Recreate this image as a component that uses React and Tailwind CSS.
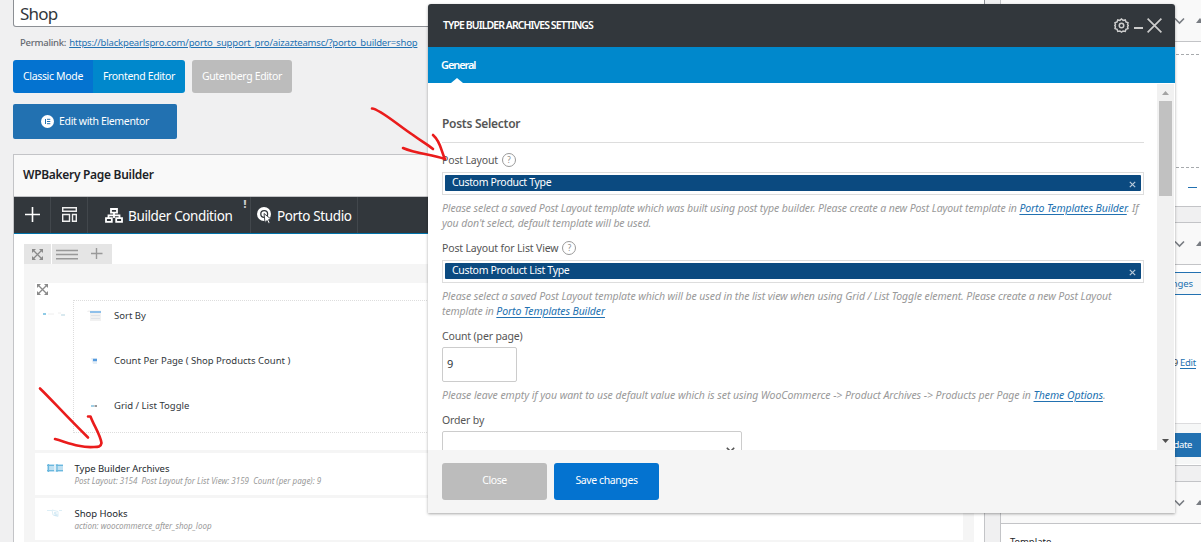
// -----------------------------------------------------------------------------
// File: App.jsx
// Description: Porto shop builder edit screen with the WPBakery element
// settings window opened over it.
// -----------------------------------------------------------------------------

const ExpandIcon = () => (
  <svg className="block h-[11px] w-[11px]" viewBox="0 0 11 11" fill="#8a8a8a">
    <path d="M0 0h4L0 4zM11 0v4L7 0zM0 11V7l4 4zM11 11H7l4-4z" />
    <path d="M1.500 1.500l8 8M9.500 1.500l-8 8" stroke="#8a8a8a" strokeWidth="1.3" />
  </svg>
);

const Chevron = () => (
  <svg className="h-[8px] w-[11px]" viewBox="0 0 11 8" fill="none" stroke="#787c82" strokeWidth="1.6">
    <path d="M1 1.5l4.5 4.5L10 1.5" />
  </svg>
);

const Triangle = () => (
  <svg className="h-[5px] w-[8px] shrink-0" viewBox="0 0 8 5" fill="#787c82">
    <path d="M0 5L4 0l4 5z" />
  </svg>
);

const Help = () => (
  <span className="ml-1 flex h-[14px] w-[14px] items-center justify-center rounded-full border border-[#999] text-[8px] leading-none text-[#888]">
    ?
  </span>
);

const Link = ({ children }) => (
  <a className="text-[#2271b1] underline underline-offset-2">{children}</a>
);

/**
 * Top bar of the WPBakery editor
 */
const Toolbar = () => (
  <div className="flex h-[37px] border-b border-[#0073aa] bg-[#32373c] text-[13.5px] tracking-[-0.37px] text-white">
    <div className="flex w-[37px] items-center justify-center border-r border-[#42474c]">
      <svg className="mb-[2px] h-[15px] w-[15px]" viewBox="0 0 15 15" stroke="#fff" strokeWidth="1.6">
        <path d="M7.5 0v15M0 7.5h15" />
      </svg>
    </div>
    <div className="flex w-[37px] items-center justify-center border-r border-[#42474c]">
      <svg className="mb-[2px] h-[15px] w-[15px]" viewBox="0 0 15 15" fill="none" stroke="#f0f0f0" strokeWidth="1.4">
        <path d="M.7.8h13.600v3.400H.7zM.7 7.500h6.800v6.700H.7zM10.500 7.500h3.800v6.700h-3.800z" />
      </svg>
    </div>
    <div className="relative flex w-[163px] items-center border-r border-[#42474c] pl-[17px]">
      <svg className="h-[15px] w-[18px]" viewBox="0 0 18 15" fill="none" stroke="#fff" strokeWidth="1.8">
        <path d="M6 1h6v3.600H6zM9 5v5M3.500 10V7.300h11V10M1 10.200h5.800v3.600H1zM11.200 10.200H17v3.600h-5.800z" />
      </svg>
      <span className="ml-[5px] pt-[2px] whitespace-nowrap">Builder Condition</span>
      <span className="absolute top-[2px] right-[4px] text-[10px] leading-none font-black text-[#ccc]">!</span>
    </div>
    <div className="flex w-[107px] items-center border-r border-[#42474c] pl-[6px]">
      <svg className="h-[17px] w-[15px]" viewBox="0 0 15 17">
        <circle cx="7" cy="7" r="7" fill="#fff" />
        <circle cx="7.2" cy="7" r="3.4" fill="none" stroke="#32373c" strokeWidth="1.3" />
        <path d="M7 6.5l1 9 2-2 1.5 3 1.6-.8-1.5-3 2.6-.4z" fill="#fff" stroke="#32373c" strokeWidth=".9" />
      </svg>
      <span className="ml-[5px] pt-[2px] whitespace-nowrap">Porto Studio</span>
    </div>
  </div>
);

const InnerRow = ({ label, children }) => (
  <div className="flex h-[45px] items-start pt-[7px]">
    <span className="flex h-[15px] w-[40px] items-center justify-center">{children}</span>
    <span className="text-[9.5px] leading-[15px] text-[#32373c]">{label}</span>
  </div>
);

const ElementRow = ({ title, info, children }) => (
  <div className="mt-[3px] flex h-[42px] bg-white pt-[9px]">
    <span className="flex h-[12px] w-[39.500px] items-center justify-center">{children}</span>
    <div>
      <div className="text-[9.5px] leading-[13px] tracking-[-0.03px] text-[#23282d]">{title}</div>
      <div className="text-[8px] leading-[11px] whitespace-pre text-[#999] italic">{info}</div>
    </div>
  </div>
);

const Editor = () => (
  <main className="ml-[13px] w-[972px] shrink-0">
    <div className="h-[27px] rounded-b-[3px] border border-t-0 border-[#8c8f94] bg-white pl-[6px] text-[17px] leading-[28px] tracking-[-0.8px] text-[#32373c]">
      Shop
    </div>
    <div className="mt-[9px] pl-[7px] text-[9.5px] leading-[14px] whitespace-nowrap text-[#646970]">
      <span className="mr-[3px] font-medium tracking-[-0.25px]">Permalink:</span>
      <a className="tracking-[-0.17px] text-[#2271b1] underline underline-offset-1">
        https://blackpearlspro.com/porto_support_pro/aizazteamsc/?porto_builder=shop
      </a>
    </div>
    <div className="mt-[10px] flex h-[33px] text-[10.5px] leading-[32px] tracking-[-0.34px] text-white">
      <span className="w-[80px] rounded-l-[3px] bg-[#0473d0] text-center">Classic Mode</span>
      <span className="w-[92px] rounded-r-[3px] bg-[#0088cc] text-center">Frontend Editor</span>
      <span className="ml-[7px] w-[100px] rounded-[3px] bg-[#bcbcbc] text-center">Gutenberg Editor</span>
    </div>
    <div className="mt-[11px] flex h-[35px] w-[164px] items-center justify-center gap-[5px] rounded-[2px] bg-[#2271b1] text-[10.5px] tracking-[-0.36px] text-white">
      <svg className="h-[13px] w-[13px]" viewBox="0 0 13 13">
        <circle cx="6.5" cy="6.5" r="6.5" fill="#fff" />
        <path d="M4.500 4v5M6 4.300h3.300M6 6.500h3.300M6 8.700h3.300" stroke="#2271b1" strokeWidth="1" />
      </svg>
      Edit with Elementor
    </div>

    <section className="mt-[15px] h-[400px] border border-[#c3c4c7] bg-white">
      <h2 className="h-[42px] border-b border-[#c3c4c7] bg-[#f9f9f9] pl-[9px] text-[12px] leading-[40px] font-semibold tracking-[-0.3px] text-[#1d2327]">
        WPBakery Page Builder
      </h2>
      <Toolbar />
      <div className="px-[10px] pt-[10px]">
        <div className="flex h-[20px] items-center">
          <span className="flex h-full w-[27px] items-center justify-center bg-[#e5e5e5]"><ExpandIcon /></span>
          <span className="ml-px flex h-full w-[60px] items-center bg-[#e5e5e5] pl-[4px]">
            <svg className="h-[12px] w-[48px]" viewBox="0 0 48 12" stroke="#999" strokeWidth="1.400">
              <path d="M0 2.500h22M0 6.500h22M0 10.700h22M35 5.500h11.500M40.500 0v11" />
            </svg>
          </span>
        </div>
        <div className="h-[280px] bg-[#f5f5f5] px-[11px] pt-[19px]">
          <div className="h-[167px] bg-white">
            <div className="h-[17px] pt-px pl-[2px]"><ExpandIcon /></div>
            <div className="flex">
              <svg className="mt-[11px] ml-[8px] h-[7px] w-[30px]" viewBox="0 0 30 7">
                <path d="M0 3h3" stroke="#8fcbe6" strokeWidth="2" />
                <path d="M5 3h6M15 2h3M19 4h3" stroke="#eee" />
                <path d="M18 4h4" stroke="#cfe4ec" strokeWidth="1.5" />
              </svg>
              <div className="h-[133px] flex-1 border border-dotted border-[#ddd]">
                <InnerRow label="Sort By">
                  <svg className="h-[11px] w-[14px]" viewBox="0 0 14 11">
                    <path d="M1 .5h13V11H3V2H0z" fill="#f1f1f1" />
                    <path d="M3 2h11" stroke="#8fc0ea" strokeWidth="2" />
                    <path d="M4 5.500h9M4 8.500h9" stroke="#dfe3e8" />
                  </svg>
                </InnerRow>
                <InnerRow label="Count Per Page ( Shop Products Count )">
                  <svg className="h-[6px] w-[7px]" viewBox="0 0 7 6">
                    <path d="M0 0h6v6H2z" fill="#e4edf5" />
                    <path d="M2 2h4" stroke="#549bdf" strokeWidth="2.4" />
                  </svg>
                </InnerRow>
                <InnerRow label="Grid / List Toggle">
                  <svg className="h-[4px] w-[6px]" viewBox="0 0 6 4">
                    <path d="M0 2h3" stroke="#9fcfe6" strokeWidth="2" />
                    <path d="M3.500 2H6" stroke="#999" strokeWidth="2" />
                  </svg>
                </InnerRow>
              </div>
            </div>
          </div>
          <ElementRow title="Type Builder Archives" info="Post Layout: 3154  Post Layout for List View: 3159  Count (per page): 9">
            <svg className="h-[8px] w-[16px]" viewBox="0 0 16 8">
              <path d="M0 0h7.500v8H0zM8.500 0H16v8H8.500z" fill="#bfe0f2" />
              <path d="M0 1.500h7M9 1.500h7M0 6.500h7M9 6.500h7M1.500 0v8M10 0v8" stroke="#6bb8de" strokeWidth="1.2" />
            </svg>
          </ElementRow>
          <ElementRow title="Shop Hooks" info="action: woocommerce_after_shop_loop">
            <svg className="h-[9px] w-[16px]" viewBox="0 0 16 9" fill="none" stroke="#dceef6">
              <path d="M0 1.500h5M12 1.500h3M5 1l6 1.500v5L6 6z" />
              <path d="M7 4h2.500M7.500 6h3" stroke="#b5dbee" />
            </svg>
          </ElementRow>
        </div>
      </div>
    </section>
  </main>
);

const BoxHeader = () => (
  <div className="flex h-[42px] items-center border-b border-[#c3c4c7] bg-[#f9f9f9] pl-[173px]">
    <Chevron />
    <span className="ml-[11px]"><Triangle /></span>
  </div>
);

/**
 * Right column with the WordPress meta boxes
 */
const Sidebar = () => (
  <aside className="ml-[15px] w-[220px] shrink-0 text-[9.5px]">
    <div className="h-[207px] border border-t-0 border-[#c3c4c7] bg-white">
      <BoxHeader />
      <div className="mt-[12px] h-[114px] border-y border-dashed border-[#a7aaad]" />
      <div className="mt-[19px] ml-[187px] h-px w-[9px] bg-[#2271b1]" />
    </div>
    <div className="mt-[15px] h-[244px] border border-[#c3c4c7] bg-white">
      <BoxHeader />
      <div className="mt-[7px] ml-[110px] h-[23px] w-[96px] rounded-[3px] border border-[#2271b1] bg-[#f6f7f7] pr-[13px] text-right leading-[22px] tracking-[-0.1px] whitespace-nowrap text-[#2271b1]">
        Preview Changes
      </div>
      <div className="mt-[61px] flex h-[14px] w-[195px] justify-end gap-[2px] leading-[14px] tracking-[-0.25px] text-[#3c434a]">
        Revisions: 9 <Link>Edit</Link>
      </div>
      <div className="mt-[53px] h-[41px] border-t border-[#dcdcde] bg-[#f6f7f7] pt-[9px]">
        <div className="ml-[120px] h-[24px] w-[90px] bg-[#2271b1] pr-[19px] text-right leading-[24px] tracking-[-0.35px] text-white">
          Update
        </div>
      </div>
    </div>
    <div className="mt-[15px] h-[80px] border border-[#c3c4c7] bg-white">
      <BoxHeader />
      <div className="mt-[11px] ml-[9px] leading-[14px] text-[#1d2327]">Template</div>
    </div>
  </aside>
);

const SelectedItem = ({ children }) => (
  <div className="h-[23px] border border-[#ddd] px-[2px] pt-[2px]">
    <div className="flex h-[16px] justify-between rounded-[1px] bg-[#0b4a80] pr-[5px] pl-[7px] text-[10.5px] leading-[14px] tracking-[-0.33px] text-white">
      <span>{children}</span>
      <svg className="mt-[6px] h-[7px] w-[7px]" viewBox="0 0 7 7" stroke="#b8cad9" strokeWidth="1.2">
        <path d="M.8.8l5.400 5.400M6.200.8L.8 6.200" />
      </svg>
    </div>
  </div>
);

const Label = ({ children }) => (
  <div className="flex h-[16px] items-center text-[10.5px] leading-[16px] tracking-[-0.15px] text-[#555]">{children}</div>
);

const Description = ({ children }) => (
  <p className="mt-[6px] mb-[9px] text-[10.5px] leading-[15px] tracking-[-0.11px] whitespace-nowrap text-[#999] italic">{children}</p>
);

/**
 * Settings window of the Type Builder Archives element
 */
const SettingsModal = () => (
  <div className="absolute top-[4px] left-[428px] flex h-[509px] w-[747px] flex-col overflow-hidden rounded-t-[3px] bg-white shadow-[0_1px_3px_rgba(0,0,0,0.35)]">
    <header className="flex h-[43px] shrink-0 items-center justify-between bg-[#32373c] pr-[13px] pl-[15px]">
      <h3 className="text-[10.5px] font-semibold tracking-[-0.92px] text-white">TYPE BUILDER ARCHIVES SETTINGS</h3>
      <div className="flex items-center">
        <svg className="h-[15px] w-[15px]" viewBox="0 0 24 24" fill="none" stroke="#ccc" strokeWidth="2.4">
          <path d="M12 1.500l2.600 2.300 3.400-.7 1.100 3.300 3.300 1.100-.7 3.400L23 12l-1.300 1.700.7 3.300-3.300 1.100L18 21.400l-3.400-.7L12 22.500l-2.600-1.800-3.400.7-1.100-3.300L1.600 17l.7-3.300L1.200 12l1.100-1.100-.7-3.400 3.300-1.100L6 3.100l3.400.7z" />
          <circle cx="12" cy="12" r="3.6" />
        </svg>
        <span className="mt-[5px] ml-[5px] h-[2px] w-[9px] bg-[#ccc]" />
        <svg className="ml-[4px] h-[15px] w-[15px]" viewBox="0 0 15 15" stroke="#ccc" strokeWidth="1.7">
          <path d="M.6.6l13.800 13.800M14.400.6L.6 14.400" />
        </svg>
      </div>
    </header>
    <nav className="relative h-[36px] shrink-0 bg-[#0088cc] pl-[13px] text-[11px] leading-[36px] font-semibold tracking-[-1.1px] text-white">
      General
      <svg className="absolute bottom-0 left-[23px] h-[5px] w-[12px]" viewBox="0 0 12 5" fill="#fff">
        <path d="M0 5l6-5 6 5z" />
      </svg>
    </nav>
    <div className="flex h-[367px] shrink-0 overflow-hidden">
      <div className="w-[729px] shrink-0 pt-[32px] pr-[13px] pl-[14px]">
        <h4 className="h-[28px] border-b border-[#ddd] text-[12px] leading-[18px] font-semibold tracking-[-0.28px] text-[#555]">Posts Selector</h4>
        <div className="mt-[9px]">
          <Label>Post Layout <Help /></Label>
        </div>
        <div className="mt-[4px]"><SelectedItem>Custom Product Type</SelectedItem></div>
        <Description>
          Please select a saved Post Layout template which was built using post type builder. Please create a new Post Layout template in <Link>Porto Templates Builder</Link>. If
          <br />
          you don't select, default template will be used.
        </Description>
        <Label>Post Layout for List View <Help /></Label>
        <div className="mt-[4px]"><SelectedItem>Custom Product List Type</SelectedItem></div>
        <Description>
          <span className="tracking-[-0.09px]">
            Please select a saved Post Layout template which will be used in the list view when using Grid / List Toggle element. Please create a new Post Layout
          </span>
          <br />
          template in <Link>Porto Templates Builder</Link>
        </Description>
        <Label>Count (per page)</Label>
        <div className="mt-[3px] h-[35px] w-[75px] rounded-[2px] border border-[#ccc] pl-[4px] text-[11px] leading-[32px] text-[#32373c]">9</div>
        <Description>
          <span className="tracking-[-0.06px]">
            Please leave empty if you want to use default value which is set using WooCommerce -&gt; Product Archives -&gt; Products per Page in <Link>Theme Options</Link>.
          </span>
        </Description>
        <Label>Order by</Label>
        <div className="mt-[3px] flex h-[35px] w-[300px] items-center justify-end rounded-[2px] border border-[#ccc] pr-[6px]">
          <svg className="mt-[2px] h-[6px] w-[9px]" viewBox="0 0 9 6" fill="none" stroke="#555" strokeWidth="1.6">
            <path d="M.8.8l3.700 3.700L8.200.8" />
          </svg>
        </div>
      </div>
      <div className="mt-px flex w-[17px] flex-col items-center bg-[#f1f1f1]">
        <svg className="mt-[7px] h-[4px] w-[7px]" viewBox="0 0 7 4" fill="#a3a3a3"><path d="M0 4l3.500-4L7 4z" /></svg>
        <div className="mt-[6px] h-[95px] w-[13px] bg-[#c1c1c1]" />
        <svg className="mt-auto mb-[7px] h-[4px] w-[7px]" viewBox="0 0 7 4" fill="#505050"><path d="M0 0l3.500 4L7 0z" /></svg>
      </div>
    </div>
    <footer className="flex h-[63px] shrink-0 gap-[7px] bg-[#f5f5f5] pt-[13px] pl-[14px] text-[10.5px] leading-[34px] tracking-[-0.4px] text-white">
      <span className="h-[37px] w-[105px] rounded-[3px] bg-[#bcbcbc] text-center">Close</span>
      <span className="h-[37px] w-[105px] rounded-[3px] bg-[#0473d0] text-center">Save changes</span>
    </footer>
  </div>
);

// Hand drawn arrows pointing at the element and at its option
const Arrows = () => (
  <svg className="pointer-events-none absolute inset-0 h-[542px] w-[1201px]" viewBox="0 0 1201 542" fill="none" stroke="#ea1c1c" strokeWidth="2.6" strokeLinecap="round" strokeLinejoin="round">
    <path d="M372 108.500C380 109 399 126 413 135C421 141 427 144 433 149M403 148C417 154 431 154 445 159M433 135C441 142 441 151 445 159" />
    <path d="M40 388.500C52 400 64 414 88 437.500M88 416.500H90.500C94 426 100 434 101.500 443C101 447 98 447 94 447C80 448 69 443 55 439" />
  </svg>
);

const App = () => (
  <div className="relative h-[542px] w-[1201px] overflow-hidden bg-[#f0f0f1] font-['Noto_Sans','Open_Sans',sans-serif]">
    <div className="flex h-full overflow-hidden">
      <Editor />
      <Sidebar />
    </div>
    <SettingsModal />
    <Arrows />
  </div>
);

export default App;
